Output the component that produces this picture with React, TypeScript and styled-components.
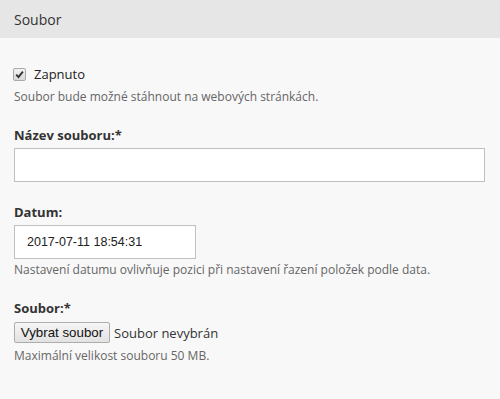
import React, { useState } from 'react';
import styled, { createGlobalStyle } from 'styled-components';

const GlobalStyle = createGlobalStyle`
  html, body {
    margin: 0;
    padding: 0;
    background: #f8f8f8;
  }
  body {
    font-family: "Open Sans", "Noto Sans", sans-serif;
    color: #333;
  }
`;

const Panel = styled.section`
  width: 500px;
  min-height: 399px;
  background: #f8f8f8;
`;

const PanelHeader = styled.header`
  height: 38px;
  display: flex;
  align-items: center;
  padding: 0 14px;
  background: #e6e6e6;
  font-size: 14px;
  color: #333;
`;

const PanelBody = styled.div`
  padding: 26px 15px 0 14px;
  display: flex;
  flex-direction: column;
`;

const Field = styled.div<{ $gap?: number }>`
  display: flex;
  flex-direction: column;
  margin-top: ${p => p.$gap ?? 0}px;
`;

const CheckRow = styled.label`
  display: flex;
  align-items: center;
  gap: 8px;
  height: 20px;
  font-size: 13px;
  color: #222;
  cursor: pointer;
`;

const CheckBox = styled.span<{ $checked: boolean }>`
  width: 11px;
  height: 11px;
  border: 1px solid #a9a9a9;
  border-radius: 2px;
  background: linear-gradient(#f2f2f2, #d8d8d8);
  display: flex;
  align-items: center;
  justify-content: center;
  margin-left: -1px;
  svg {
    display: ${p => (p.$checked ? 'block' : 'none')};
  }
`;

const Hint = styled.div<{ $gap?: number }>`
  font-size: 12px;
  line-height: 18px;
  color: #666;
  margin-top: ${p => p.$gap ?? 0}px;
`;

const Label = styled.label`
  font-size: 13px;
  font-weight: 700;
  line-height: 18px;
  color: #333;
`;

const TextInput = styled.input<{ $width?: number }>`
  box-sizing: border-box;
  margin-top: 4px;
  height: 34px;
  width: ${p => (p.$width ? `${p.$width}px` : '100%')};
  border: 1px solid #c0c0c0;
  background: #fff;
  padding: 0 12px;
  font-family: "Liberation Sans", Arial, sans-serif;
  font-size: 12.5px;
  color: #222;
  outline: none;
`;

const FileRow = styled.div`
  display: flex;
  align-items: center;
  gap: 4px;
  margin-top: 5px;
  height: 21px;
`;

const FileButton = styled.button`
  box-sizing: border-box;
  height: 21px;
  width: 96px;
  padding: 0;
  border: 1px solid #adadad;
  border-radius: 2px;
  background: linear-gradient(#f6f6f6, #e2e2e2);
  font-family: "Liberation Sans", Arial, sans-serif;
  font-size: 13.3px;
  color: #111;
`;

const FileName = styled.span`
  font-size: 13px;
  color: #333;
`;

export default function App() {
  const [enabled, setEnabled] = useState(true);

  return (
    <>
      <GlobalStyle />
      <Panel>
        <PanelHeader>Soubor</PanelHeader>
        <PanelBody>
          <CheckRow onClick={() => setEnabled(!enabled)}>
            <CheckBox $checked={enabled}>
              <svg width="9" height="9" viewBox="0 0 9 9">
                <path d="M1.2 4.6 L3.5 7 L7.9 1.6" fill="none" stroke="#333" strokeWidth="1.9" />
              </svg>
            </CheckBox>
            Zapnuto
          </CheckRow>
          <Hint $gap={4}>Soubor bude možné stáhnout na webových stránkách.</Hint>

          <Field $gap={20}>
            <Label>Název souboru:*</Label>
            <TextInput type="text" />
          </Field>

          <Field $gap={21}>
            <Label>Datum:</Label>
            <TextInput type="text" $width={182} defaultValue="2017-07-11 18:54:31" />
            <Hint $gap={2}>Nastavení datumu ovlivňuje pozici při nastavení řazení položek podle data.</Hint>
          </Field>

          <Field $gap={20}>
            <Label>Soubor:*</Label>
            <FileRow>
              <FileButton type="button">Vybrat soubor</FileButton>
              <FileName>Soubor nevybrán</FileName>
            </FileRow>
            <Hint $gap={4}>Maximální velikost souboru 50 MB.</Hint>
          </Field>
        </PanelBody>
      </Panel>
    </>
  );
}
